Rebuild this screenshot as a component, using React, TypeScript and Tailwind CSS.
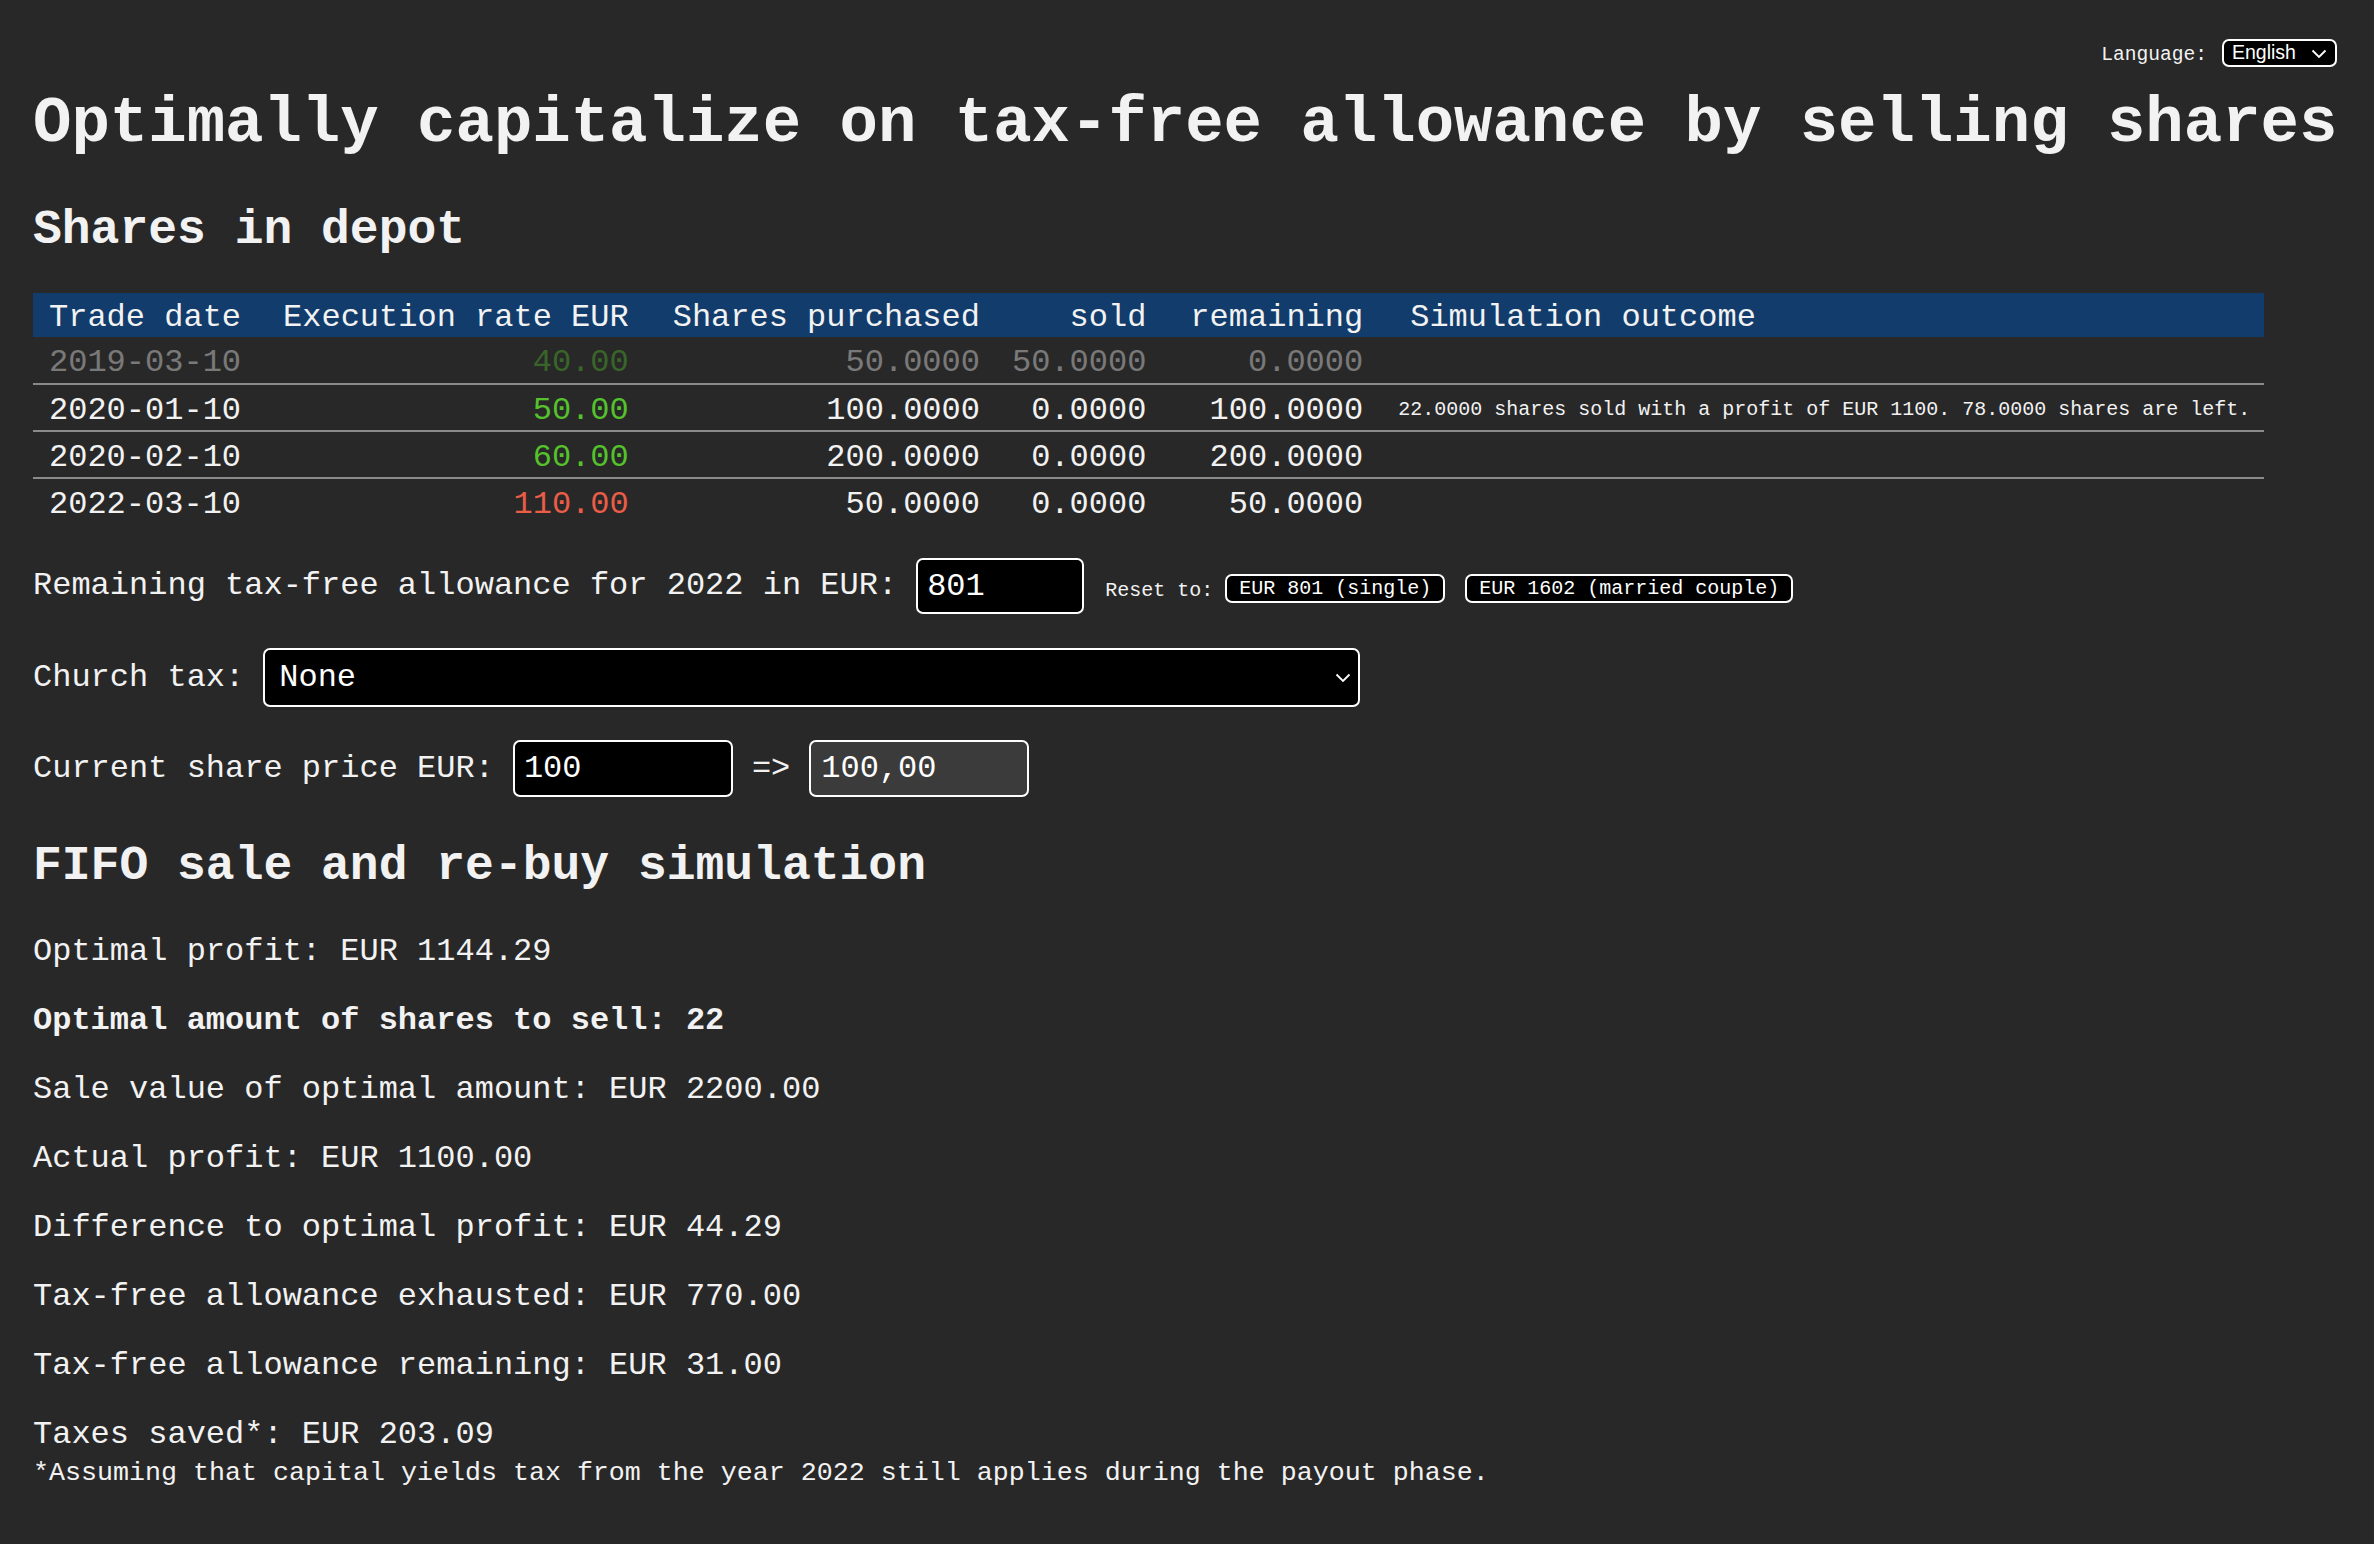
type Lot = {
  date: string;
  rate: string;
  rateTone: 'green' | 'red';
  purchased: string;
  sold: string;
  remaining: string;
  outcome?: string;
  spent?: boolean;
};

const lots: Lot[] = [
  { date: '2019-03-10', rate: '40.00', rateTone: 'green', purchased: '50.0000', sold: '50.0000', remaining: '0.0000', spent: true },
  {
    date: '2020-01-10',
    rate: '50.00',
    rateTone: 'green',
    purchased: '100.0000',
    sold: '0.0000',
    remaining: '100.0000',
    outcome: '22.0000 shares sold with a profit of EUR 1100. 78.0000 shares are left.',
  },
  { date: '2020-02-10', rate: '60.00', rateTone: 'green', purchased: '200.0000', sold: '0.0000', remaining: '200.0000' },
  { date: '2022-03-10', rate: '110.00', rateTone: 'red', purchased: '50.0000', sold: '0.0000', remaining: '50.0000' },
];

const results = [
  { text: 'Optimal profit: EUR 1144.29' },
  { text: 'Optimal amount of shares to sell: 22', bold: true },
  { text: 'Sale value of optimal amount: EUR 2200.00' },
  { text: 'Actual profit: EUR 1100.00' },
  { text: 'Difference to optimal profit: EUR 44.29' },
  { text: 'Tax-free allowance exhausted: EUR 770.00' },
  { text: 'Tax-free allowance remaining: EUR 31.00' },
];

function Chevron({ className }: { className?: string }) {
  return (
    <svg className={className} width="16" height="10" viewBox="0 0 16 10" fill="none">
      <path d="M1.5 1.5 L8 8 L14.5 1.5" stroke="white" strokeWidth="1.8" />
    </svg>
  );
}

export default function App() {
  return (
    <div className="min-h-screen bg-[#282828] px-[33px] pb-16 font-['Liberation_Mono',monospace] text-[32px] text-[#f2f2f2]">
      {/* Language */}
      <div className="flex items-center justify-end gap-[15px] pr-[4px] pt-[39px]">
        <span className="mt-[6px] text-[19.6px] leading-none">Language:</span>
        <div className="relative flex h-[28px] w-[115px] items-center rounded-[7px] border-2 border-white bg-black pl-[8px] font-['Liberation_Sans',Arial,sans-serif] text-[19.5px] leading-none text-white">
          English
          <Chevron className="absolute right-[8px] top-[8px]" />
        </div>
      </div>

      <h1 className="mt-[25px] whitespace-nowrap text-[64px] font-bold leading-none">
        Optimally capitalize on tax-free allowance by selling shares
      </h1>

      {/* Shares in depot */}
      <h2 className="mt-[50px] text-[48px] font-bold leading-none">Shares in depot</h2>

      <table className="mt-[39px] whitespace-nowrap text-[32px] leading-none">
        <thead>
          <tr className="h-[44px] bg-[#113c6c]">
            <th className="pl-[16px] pr-[21px] pt-[6px] text-left font-normal">Trade date</th>
            <th className="pl-[21px] pr-[22px] pt-[6px] text-right font-normal">Execution rate EUR</th>
            <th className="pl-[22px] pr-[16px] pt-[6px] text-right font-normal">Shares purchased</th>
            <th className="pl-[16px] pr-[22px] pt-[6px] text-right font-normal">sold</th>
            <th className="pl-[22px] pr-[23px] pt-[6px] text-right font-normal">remaining</th>
            <th className="pl-[24px] pr-[14px] pt-[6px] text-left font-normal">Simulation outcome</th>
          </tr>
        </thead>
        <tbody>
          {lots.map((lot, i) => (
            <tr
              key={lot.date}
              className={`h-[47px] ${i < lots.length - 1 ? 'border-b-2 border-[#8a8a8a]' : ''}`}
            >
              <td className={`pl-[16px] pr-[21px] pt-[6px] ${lot.spent ? 'opacity-40' : ''}`}>{lot.date}</td>
              <td
                className={`pl-[21px] pr-[22px] pt-[6px] text-right ${lot.spent ? 'opacity-40' : ''} ${
                  lot.rateTone === 'green' ? 'text-[#55c12c]' : 'text-[#ea5d47]'
                }`}
              >
                {lot.rate}
              </td>
              <td className={`pl-[22px] pr-[16px] pt-[6px] text-right ${lot.spent ? 'opacity-40' : ''}`}>{lot.purchased}</td>
              <td className={`pl-[16px] pr-[22px] pt-[6px] text-right ${lot.spent ? 'opacity-40' : ''}`}>{lot.sold}</td>
              <td className={`pl-[22px] pr-[23px] pt-[6px] text-right ${lot.spent ? 'opacity-40' : ''}`}>{lot.remaining}</td>
              <td className="pl-[12px] pr-[14px] pt-[4px] text-[20px]">{lot.outcome ?? ''}</td>
            </tr>
          ))}
        </tbody>
      </table>

      {/* Allowance */}
      <div className="mt-[33px] flex h-[56px] items-center">
        <span>Remaining tax-free allowance for 2022 in EUR:</span>
        <input
          readOnly
          value="801"
          className="ml-[19px] h-[56px] w-[168px] rounded-[7px] border-2 border-white bg-black px-[9px] text-[32px] text-white outline-none"
        />
        <span className="ml-[21px] mt-[10px] text-[20px] leading-none">Reset to:</span>
        <button className="ml-[12px] mt-[5px] h-[29px] rounded-[7px] border-2 border-white bg-black px-[12px] text-[20px] leading-none text-white">
          EUR 801 (single)
        </button>
        <button className="ml-[20px] mt-[5px] h-[29px] rounded-[7px] border-2 border-white bg-black px-[12px] text-[20px] leading-none text-white">
          EUR 1602 (married couple)
        </button>
      </div>

      {/* Church tax */}
      <div className="mt-[34px] flex h-[59px] items-center gap-[19px]">
        <span>Church tax:</span>
        <div className="relative flex h-[59px] w-[1097px] items-center rounded-[7px] border-2 border-white bg-black pl-[14px] text-white">
          None
          <Chevron className="absolute right-[7px] top-[23px]" />
        </div>
      </div>

      {/* Share price */}
      <div className="mt-[33px] flex h-[57px] items-center gap-[19px]">
        <span>Current share price EUR:</span>
        <input
          readOnly
          value="100"
          className="h-[57px] w-[220px] rounded-[7px] border-2 border-white bg-black px-[9px] text-[32px] text-white outline-none"
        />
        <span>=&gt;</span>
        <input
          readOnly
          value="100,00"
          className="h-[57px] w-[220px] rounded-[7px] border-2 border-white bg-[#3b3b3b] px-[10px] text-[32px] text-white outline-none"
        />
      </div>

      {/* Simulation */}
      <h2 className="mt-[45px] text-[48px] font-bold leading-none">FIFO sale and re-buy simulation</h2>

      <div className="mt-[43px] flex flex-col gap-[32px] leading-[37px]">
        {results.map((r) => (
          <p key={r.text} className={r.bold ? 'font-bold' : ''}>
            {r.text}
          </p>
        ))}
        <p>
          Taxes saved*: EUR 203.09
          <br />
          <small className="text-[26.67px]">
            *Assuming that capital yields tax from the year 2022 still applies during the payout phase.
          </small>
        </p>
      </div>
    </div>
  );
}
